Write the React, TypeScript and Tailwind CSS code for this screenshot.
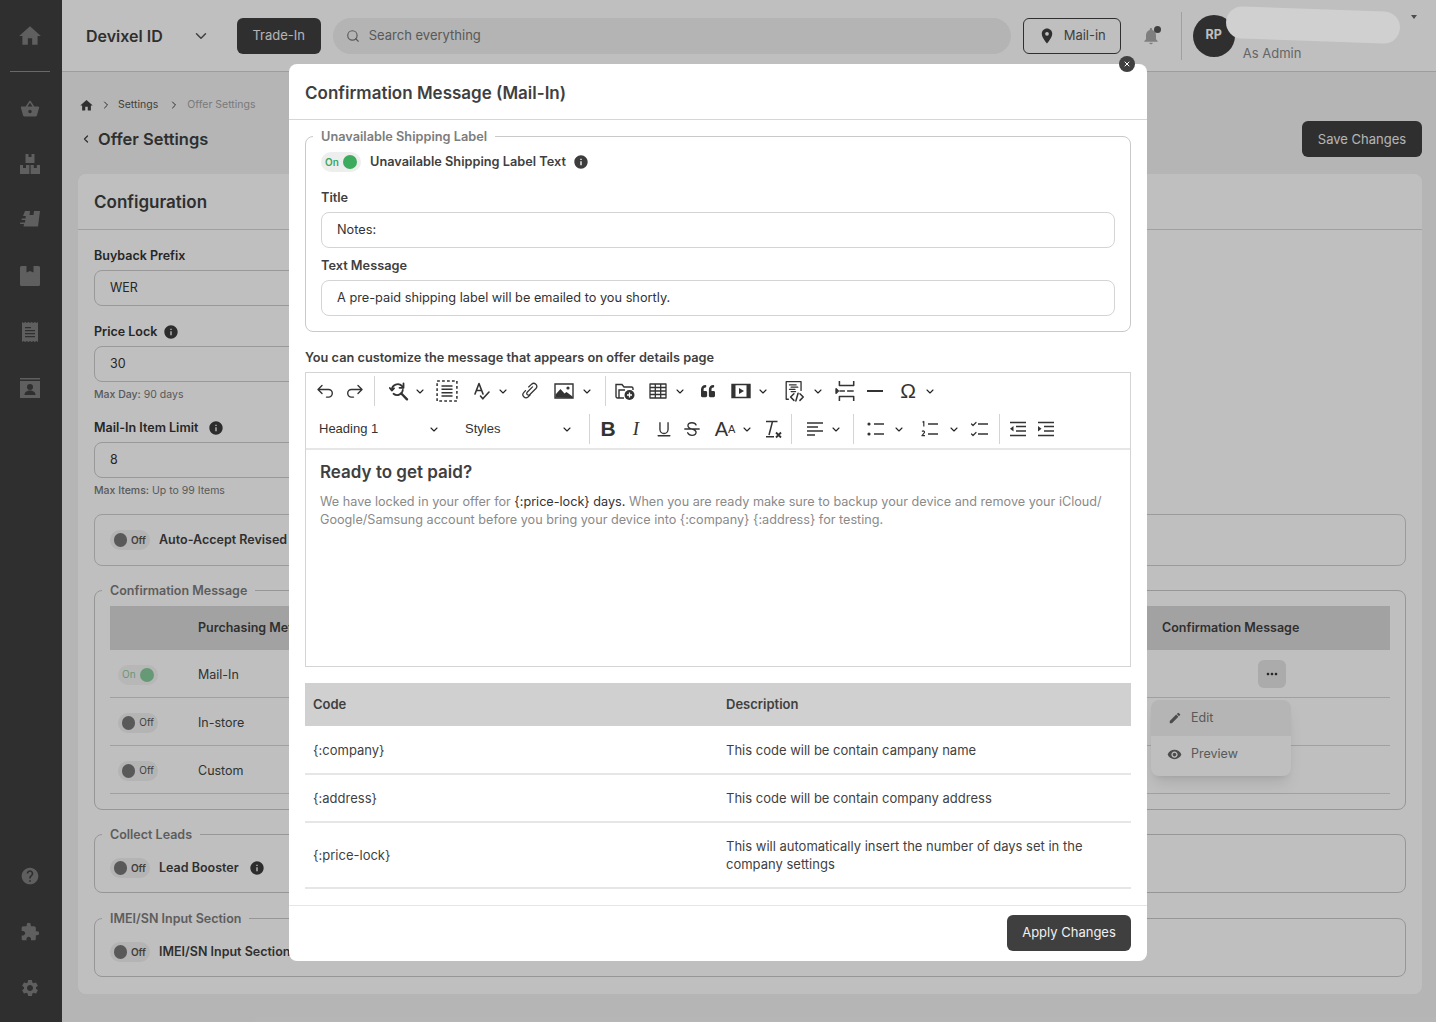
import { ReactNode } from "react";
import { ChevronDown, ChevronLeft, ChevronRight, Search, X } from "lucide-react";
import {
  MdHome,
  MdShoppingBasket,
  MdHelp,
  MdExtension,
  MdSettings,
  MdInfo,
  MdNotifications,
  MdLocationOn,
  MdVisibility,
  MdEdit,
  MdMoreHoriz,
} from "react-icons/md";
import { FaQuoteLeft } from "react-icons/fa";

// ---- small shared pieces ----

function Toggle({ on, dim, className = "" }: { on?: boolean; dim?: boolean; className?: string }) {
  return (
    <span
      className={`inline-flex h-5 w-10 shrink-0 items-center gap-1 rounded-full px-1 text-[10px] ${
        on ? "bg-[#eeeeee] text-[#3da55d]" : "bg-[#f0f0f0] text-[#555555]"
      } ${dim ? "opacity-60" : ""} ${className}`}
    >
      {on ? (
        <>
          <span>On</span>
          <span className="h-3.5 w-3.5 rounded-full bg-[#3cab5e]" />
        </>
      ) : (
        <>
          <span className="h-3.5 w-3.5 rounded-full bg-[#777777]" />
          <span>Off</span>
        </>
      )}
    </span>
  );
}

function Info({ className = "" }: { className?: string }) {
  return <MdInfo className={`h-4 w-4 shrink-0 text-[#3d3d3d] ${className}`} />;
}

function Field({ label, value, infoClass, hint }: { label: string; value: string; infoClass?: string; hint?: ReactNode }) {
  return (
    <div>
      <div className="flex h-[18px] items-center gap-2 text-[12.5px] font-semibold text-[#333333]">
        {label}
        {infoClass !== undefined && <Info className={infoClass} />}
      </div>
      <div className="mt-[5px] flex h-9 w-[640px] items-center rounded-lg border border-[#cccccc] px-[15px] pt-px text-[12.5px] text-[#333333]">
        {value}
      </div>
      {hint && <div className="mt-[6px] h-[13px] text-[10.5px] leading-[13px] text-[#777777]">{hint}</div>}
    </div>
  );
}

function Group({ title, className, legendSize, children }: { title: string; className?: string; legendSize?: string; children: ReactNode }) {
  return (
    <fieldset className={`rounded-lg border border-[#c9c9c9] px-[15px] ${className ?? ""}`}>
      <legend className={`-ml-2 px-2 font-semibold leading-[16px] text-[#7d7d7d] ${legendSize ?? "text-[12.5px]"}`}>
        <span className="block translate-y-px">{title}</span>
      </legend>
      {children}
    </fieldset>
  );
}

// ---- sidebar icons that the packs do not carry ----

const BoxesIcon = () => (
  <svg viewBox="0 0 20 20" className="h-5 w-5" fill="currentColor">
    <path d="M5.500 0h9v9h-9zM0 11h9.400v9H0zM10.600 11H20v9h-9.400z" />
    <path d="M8.500 0h3v3h-3zM3 11h3v3H3zM13.800 11h3v3h-3z" fill="#3f3f3f" />
  </svg>
);

const ShipIcon = () => (
  <svg viewBox="0 0 20 20" className="h-5 w-5" fill="currentColor">
    <path d="M5 1h15l-2 15.500H3.500L4 14H0l.3-1.500H5l.3-2.500H1.500l.3-1.500h3.700l.3-2.500H3z" />
    <path d="M10 1h4l-.5 4h-4z" fill="#3f3f3f" />
  </svg>
);

const BookmarkBoxIcon = () => (
  <svg viewBox="0 0 20 20" className="h-5 w-5" fill="currentColor">
    <path d="M1.500 0H6.500v6.500L10 5l3.500 1.500V0h5A1.500 1.500 0 0 1 20 1.500v17a1.500 1.500 0 0 1-1.500 1.500h-17A1.500 1.500 0 0 1 0 18.500v-17A1.500 1.500 0 0 1 1.500 0z" />
  </svg>
);

const ReceiptIcon = () => (
  <svg viewBox="0 0 20 20" className="h-5 w-5" fill="currentColor">
    <path d="M2 0l1.600 1L5.200 0l1.600 1 1.600-1L10 1l1.600-1 1.600 1 1.600-1 1.600 1L18 0v20l-1.600-1-1.600 1-1.600-1-1.600 1L10 19l-1.600 1-1.600-1-1.600 1-1.600-1L2 20z" />
    <path d="M5 5h6v1.200H5zM5 8h10v1.200H5zM5 11h10v1.200H5zM5 14h10v1.200H5z" fill="#3f3f3f" />
  </svg>
);

const ContactIcon = () => (
  <svg viewBox="0 0 20 20" className="h-5 w-5" fill="currentColor">
    <path d="M0 0h20v1.500H0zM0 3h20v17H0z" />
    <circle cx="10" cy="9" r="3" fill="#3f3f3f" />
    <path d="M4.500 17c0-3 2.500-4.500 5.500-4.500s5.500 1.500 5.500 4.500z" fill="#3f3f3f" />
  </svg>
);

const SideIcon = ({ children }: { children: ReactNode }) => (
  <div className="flex h-5 w-5 items-center justify-center text-[#7f7f7f]">{children}</div>
);

// ---- editor toolbar ----

const Tool = ({ className = "", children }: { className?: string; children: ReactNode }) => (
  <span className={`flex h-7 w-7 shrink-0 items-center justify-center text-[#333333] ${className}`}>{children}</span>
);

const Chev = ({ className = "" }: { className?: string }) => (
  <ChevronDown className={`h-[13px] w-3 shrink-0 text-[#222222] ${className}`} strokeWidth={2.2} />
);

const Sep = ({ className = "" }: { className?: string }) => (
  <span className={`h-[30px] w-px shrink-0 bg-[#d4d4d4] ${className}`} />
);

const svgProps = {
  viewBox: "0 0 20 20",
  fill: "none",
  stroke: "currentColor",
  strokeWidth: 1.4,
  strokeLinecap: "round" as const,
  strokeLinejoin: "round" as const,
};

const UndoIcon = () => (
  <svg {...svgProps} className="h-5 w-5">
    <path d="M6 4.500 2 8.500l4 4M2.500 8.500h10a3.800 3.800 0 0 1 0 7.600h-2" />
  </svg>
);
const RedoIcon = () => (
  <svg {...svgProps} className="h-5 w-5">
    <path d="M14 4.500l4 4-4 4M17.500 8.500h-10a3.800 3.800 0 0 0 0 7.600h2" />
  </svg>
);
const FindIcon = () => (
  <svg {...svgProps} strokeWidth={1.800} className="h-5 w-5">
    <path d="M2.800 9a6 6 0 0 1 10.200-4l1 1.500" />
    <path d="M14.500 2.500v4.300h-4M0.800 7l2 2.500L5 7.300" />
    <path d="M13.800 9a5.700 5.700 0 0 1-9.300 3.800" />
    <path d="M12.300 12.500l5.700 5.800" strokeWidth={2.400} />
  </svg>
);
const SelectAllIcon = () => (
  <svg {...svgProps} strokeLinecap="butt" className="h-[22px] w-[22px]">
    <rect x="1" y="1" width="18" height="18" strokeDasharray="2.500 2" />
    <path d="M5 5.500h10M5 8.500h10M5 11.500h10M5 14.500h10" />
  </svg>
);
const SpellIcon = () => (
  <svg {...svgProps} strokeWidth={1.600} className="h-5 w-5">
    <path d="M3 13 7 2.500 11 13M4.500 9.500h5" />
    <path d="M8.500 15l2.300 2.800L17 11" />
  </svg>
);
const LinkIcon = () => (
  <svg {...svgProps} className="h-[18px] w-[18px]">
    <path d="M8.500 5.500 11.800 2.400a3.400 3.400 0 0 1 4.800 4.800l-7 7a2 2 0 0 1-2.800-2.800l6-6" />
    <path d="M5 9.500 3 11.800a3.400 3.400 0 0 0 4.800 4.800L10 14.500" />
  </svg>
);
const ImageIcon = () => (
  <svg viewBox="0 0 20 20" className="h-5 w-5">
    <path d="M1 3h18v14H1z" fill="none" stroke="currentColor" strokeWidth="1.400" />
    <path d="M1.500 16.500v-3L6.500 8l4 4.500 2-1.500 6 4.500v1.500z" fill="currentColor" />
    <circle cx="14" cy="7" r="1.600" fill="currentColor" />
  </svg>
);
const FolderAddIcon = () => (
  <svg viewBox="0 0 20 20" className="h-5 w-5">
    <path d="M9 17H2.500A1.500 1.500 0 0 1 1 15.500V3.500h6l2 2.500h7.500A1.500 1.500 0 0 1 18 7.500V9M4 17V9h6" fill="none" stroke="currentColor" strokeWidth="1.400" />
    <circle cx="14.500" cy="14" r="5" fill="currentColor" />
    <path d="M14.500 11.500v5M12 14h5" stroke="#fff" strokeWidth="1.300" />
  </svg>
);
const TableIcon = () => (
  <svg {...svgProps} strokeLinecap="butt" strokeWidth={1.300} className="h-5 w-5">
    <path d="M2 3h16v14H2z" />
    <path d="M2 6.500h16M2 10h16M2 13.500h16M7.300 3v14M12.700 3v14" />
  </svg>
);
const MediaIcon = () => (
  <svg viewBox="0 0 20 20" className="h-5 w-5">
    <path d="M1 3.500h18v13H1z" fill="none" stroke="currentColor" strokeWidth="1.400" />
    <path d="M1 3.500h3.500v13H1zM15.500 3.500H19v13h-3.500z" fill="currentColor" />
    <path d="M8 7l5 3-5 3z" fill="currentColor" />
  </svg>
);
const CodeIcon = () => (
  <svg {...svgProps} strokeWidth={1.200} className="h-[22px] w-[22px]">
    <path d="M4 17.500H2V1.500h13.500v8" />
    <path d="M5 4.500h6M6.500 6.500h6M5 8.500h5M6.500 10.500h4" />
    <path d="M9 12.500l-3 3 3 3M14.500 12.500l3 3-3 3M12.800 12l-2 7" strokeWidth={1.400} />
  </svg>
);
const PageBreakIcon = () => (
  <svg {...svgProps} strokeLinecap="butt" className="h-[22px] w-[22px]">
    <path d="M4 1v4h13V1M4 19v-4h13v4" />
    <path d="M4 10h5M11 10h6" />
    <path d="M1 8l2 2-2 2z" fill="currentColor" />
  </svg>
);
const UnderlineIcon = () => (
  <svg {...svgProps} strokeWidth={1.500} className="h-[18px] w-[18px]">
    <path d="M5.500 3v7.500a4.500 4.500 0 0 0 9 0V3M3.500 17.500h13" />
  </svg>
);
const StrikeIcon = () => (
  <svg {...svgProps} strokeWidth={1.500} className="h-[18px] w-[18px]">
    <path d="M14.500 5.500C14 4 12.500 3 10 3 7.500 3 5.500 4.300 5.500 6.300c0 2 2 3 4.500 3.700 2.700.8 4.500 1.700 4.500 3.700S12.500 17 10 17c-2.500 0-4-1-4.800-2.800M2 10h16" />
  </svg>
);
const ClearIcon = () => (
  <svg {...svgProps} strokeLinecap="butt" className="h-5 w-5">
    <path d="M3 2.500h11.500M9.500 2.500 6 16M3 17.800h8" strokeWidth={1.500} />
    <path d="M13 13.500l5 5M18 13.500l-5 5" strokeWidth={1.800} />
  </svg>
);
const AlignIcon = () => (
  <svg {...svgProps} strokeWidth={1.600} strokeLinecap="butt" className="h-5 w-5">
    <path d="M2 4h16M2 8h11M2 12h16M2 16h8" />
  </svg>
);
const BulletIcon = () => (
  <svg {...svgProps} strokeLinecap="butt" strokeWidth={1.600} className="h-5 w-5">
    <path d="M8 5h10M8 15h10" />
    <circle cx="3" cy="5" r="1.600" fill="currentColor" stroke="none" />
    <circle cx="3" cy="15" r="1.600" fill="currentColor" stroke="none" />
  </svg>
);
const OrderedIcon = () => (
  <svg {...svgProps} strokeLinecap="butt" className="h-5 w-5">
    <path d="M8 5h10M8 15h10" strokeWidth={1.600} />
    <path d="M2.500 3.200 3.800 2.500v5M2 12.500c1-1 2.800-.5 2.500 1l-2.500 3.200h3" strokeWidth={1.200} />
  </svg>
);
const TodoIcon = () => (
  <svg {...svgProps} className="h-5 w-5">
    <path d="M8 5h10M8 15h10" strokeWidth={1.600} strokeLinecap="butt" />
    <path d="M1.500 5l1.500 1.500L6 3.500M1.500 15l1.500 1.500L6 13.500" strokeWidth={1.200} />
  </svg>
);
const OutdentIcon = () => (
  <svg {...svgProps} strokeLinecap="butt" strokeWidth={1.500} className="h-5 w-5">
    <path d="M2 3.500h16M8 7.500h10M8 12h10M2 16.500h16" />
    <path d="M5.500 7 2 9.800l3.500 2.700z" fill="currentColor" stroke="none" />
  </svg>
);
const IndentIcon = () => (
  <svg {...svgProps} strokeLinecap="butt" strokeWidth={1.500} className="h-5 w-5">
    <path d="M2 3.500h16M8 7.500h10M8 12h10M2 16.500h16" />
    <path d="M2 7l3.500 2.800L2 12.500z" fill="currentColor" stroke="none" />
  </svg>
);

function EditorToolbar() {
  return (
    <div className="border-b-2 border-[#e6e6e6]">
      <div className="flex h-[37px] items-center pb-px pl-[6px]">
        <Tool><UndoIcon /></Tool>
        <Tool><RedoIcon /></Tool>
        <Sep className="ml-[6px]" />
        <Tool className="ml-[10px]"><FindIcon /></Tool>
        <Chev className="ml-px" />
        <Tool className="ml-[7px]"><SelectAllIcon /></Tool>
        <Tool className="ml-[7px]"><SpellIcon /></Tool>
        <Chev className="ml-px" />
        <Tool className="ml-[7px]"><LinkIcon /></Tool>
        <Tool className="ml-[6px]"><ImageIcon /></Tool>
        <Chev className="ml-[3px]" />
        <Sep className="ml-3" />
        <Tool className="ml-[5px]"><FolderAddIcon /></Tool>
        <Tool className="ml-[5px]"><TableIcon /></Tool>
        <Chev className="ml-[2px]" />
        <Tool className="ml-2"><FaQuoteLeft className="h-[14px] w-[14px]" /></Tool>
        <Tool className="ml-[5px]"><MediaIcon /></Tool>
        <Chev className="ml-[2px]" />
        <Tool className="ml-3"><CodeIcon /></Tool>
        <Chev className="ml-[3px]" />
        <Tool className="ml-2"><PageBreakIcon /></Tool>
        <Tool className="ml-px"><span className="h-[2px] w-4 bg-[#333333]" /></Tool>
        <Tool className="ml-[5px] text-[21px] [font-family:'Liberation_Sans',sans-serif]">Ω</Tool>
        <Chev className="ml-[2px]" />
      </div>
      <div className="flex h-[38px] items-center pl-[13px] text-[13px] text-[#333333] [font-family:'Liberation_Sans',sans-serif]">
        <span className="flex w-[121px] items-center justify-between">Heading 1<Chev /></span>
        <span className="ml-[25px] flex w-[108px] items-center justify-between">Styles<Chev /></span>
        <Sep className="ml-4" />
        <Tool className="ml-1 text-[21px] font-bold">B</Tool>
        <Tool className="text-[19px] italic [font-family:'Liberation_Serif',serif]">I</Tool>
        <Tool><UnderlineIcon /></Tool>
        <Tool><StrikeIcon /></Tool>
        <Tool className="ml-[5px] text-[20px]">A<span className="text-[11px]">A</span></Tool>
        <Chev className="ml-[2px]" />
        <Tool className="ml-[6px]"><ClearIcon /></Tool>
        <Sep className="ml-1" />
        <Tool className="ml-[9px]"><AlignIcon /></Tool>
        <Chev className="ml-px" />
        <Sep className="ml-[11px]" />
        <Tool className="ml-2"><BulletIcon /></Tool>
        <Chev className="ml-[3px]" />
        <Tool className="ml-[11px]"><OrderedIcon /></Tool>
        <Chev className="ml-1" />
        <Tool className="ml-[6px]"><TodoIcon /></Tool>
        <Sep className="ml-[5px]" />
        <Tool className="ml-1"><OutdentIcon /></Tool>
        <Tool><IndentIcon /></Tool>
      </div>
    </div>
  );
}

// ---- page behind the dialog ----

const RULE_ROWS = [
  { label: "Mail-In", on: true },
  { label: "In-store", on: false },
  { label: "Custom", on: false },
];

function Page() {
  return (
    <div className="flex h-[1022px] overflow-hidden bg-[#f2f2f2]">
      <aside className="flex w-[62px] shrink-0 flex-col items-center bg-[#3f3f3f] pb-6 pr-[2px]">
        <div className="flex h-[72px] w-10 shrink-0 items-center justify-center border-b border-[#8c8c8c] pt-px text-[#7f7f7f]">
          <MdHome className="h-[26px] w-[26px]" />
        </div>
        <div className="flex flex-col gap-9 pt-[26px]">
          <SideIcon><MdShoppingBasket className="h-6 w-6 translate-y-px" /></SideIcon>
          <SideIcon><BoxesIcon /></SideIcon>
          <SideIcon><ShipIcon /></SideIcon>
          <SideIcon><BookmarkBoxIcon /></SideIcon>
          <SideIcon><ReceiptIcon /></SideIcon>
          <SideIcon><ContactIcon /></SideIcon>
        </div>
        <div className="mt-auto flex flex-col gap-9">
          <SideIcon><MdHelp className="h-6 w-6" /></SideIcon>
          <SideIcon><MdExtension className="h-6 w-6" /></SideIcon>
          <SideIcon><MdSettings className="h-6 w-6" /></SideIcon>
        </div>
      </aside>

      <div className="flex min-w-0 flex-1 flex-col">
        <header className="flex h-[72px] shrink-0 items-center border-b border-[#d2d2d2] bg-white pl-6 pr-[14px]">
          <span className="text-[16px] font-semibold text-[#3f3f3f]">Devixel ID</span>
          <ChevronDown className="ml-[29px] h-[18px] w-[18px] text-[#555555]" />
          <button className="ml-[27px] h-9 w-[84px] rounded-md bg-[#3f3f3f] text-[13px] text-[#f0f0f0]">Trade-In</button>
          <div className="ml-3 flex h-9 w-[678px] items-center rounded-full bg-[#f0f0f0] pl-[13px] text-[13px] text-[#777777]">
            <Search className="h-[14px] w-[14px]" />
            <span className="ml-[9px]">Search everything</span>
          </div>
          <button className="ml-3 flex h-9 w-[98px] items-center justify-center gap-2 rounded-md border border-[#3f3f3f] text-[13px] text-[#555555]">
            <MdLocationOn className="h-[18px] w-[18px] text-[#3f3f3f]" />
            Mail-in
          </button>
          <div className="relative ml-5 h-5 w-5 text-[#aaaaaa]">
            <MdNotifications className="h-5 w-5" />
            <span className="absolute right-0 top-0 h-[7px] w-[7px] rounded-full bg-[#555555]" />
          </div>
          <span className="ml-5 h-12 w-px bg-[#d6d6d6]" />
          <div className="relative ml-[11px] flex flex-1 items-center">
            <span className="flex h-[42px] w-[42px] items-center justify-center rounded-full bg-[#3f3f3f] text-[12.5px] font-bold text-white">RP</span>
            <span className="ml-2 mt-[36px] text-[13px] text-[#888888]">As Admin</span>
            <span className="absolute right-[5px] top-[7px] h-0 w-0 border-x-[3px] border-t-[4px] border-x-transparent border-t-[#666666]" />
          </div>
        </header>

        <main className="flex min-h-0 flex-1 flex-col pl-4 pr-[14px]">
          <div className="flex h-[32px] items-center pl-[1px] pt-[33px] text-[10.5px] text-[#555555]">
            <MdHome className="h-[15px] w-[15px] text-[#3f3f3f]" />
            <ChevronRight className="ml-[6px] h-3 w-3 text-[#3f3f3f]" />
            <span className="ml-[6px]">Settings</span>
            <ChevronRight className="ml-[10px] h-3 w-3 text-[#3f3f3f]" />
            <span className="ml-[7px] text-[#a3a3a3]">Offer Settings</span>
          </div>
          <div className="flex h-[69px] items-start justify-between">
            <div className="mt-[22px] flex items-center pl-[2px] text-[#3f3f3f]">
              <ChevronLeft className="h-3 w-3" strokeWidth={2.500} />
              <span className="ml-[6px] text-[16.500px] font-semibold">Offer Settings</span>
            </div>
            <button className="mt-4 h-9 w-[120px] rounded-md bg-[#3f3f3f] pt-px text-[13px] text-[#f0f0f0]">Save Changes</button>
          </div>

          <section className="h-[820px] rounded-lg bg-white">
            <div className="flex h-14 items-center border-b border-[#d6d6d6] px-4 pt-[3px] text-[17px] font-semibold text-[#3f3f3f]">Configuration</div>
            <div className="flex flex-col px-4 pt-[17px]">
              <Field label="Buyback Prefix" value="WER" />
              <div className="mt-[17px]">
                <Field label="Price Lock" value="30" infoClass="-ml-[2px]" hint={<><span className="font-medium">Max Day:</span> 90 days</>} />
              </div>
              <div className="mt-[18px]">
                <Field label="Mail-In Item Limit" value="8" infoClass="ml-[2px]" hint={<><span className="font-medium">Max Items:</span> Up to 99 Items</>} />
              </div>
              <div className="mt-[17px] flex h-[52px] items-center gap-[9px] rounded-lg border border-[#cfcfcf] px-[15px] text-[12.5px] font-semibold text-[#3f3f3f]">
                <Toggle />
                Auto-Accept Revised Offers
              </div>
              <Group title="Confirmation Message" className="mt-4 h-[228px] pb-4">
                <div className="grid grid-cols-[88px_1fr_228px] pt-2 text-[12.5px] text-[#444444]">
                  <div className="col-span-3 grid h-11 grid-cols-subgrid items-center bg-[#d9d9d9] font-semibold text-[#3f3f3f]">
                    <span />
                    <span>Purchasing Method</span>
                    <span>Confirmation Message</span>
                  </div>
                  {RULE_ROWS.map((row, i) => (
                    <div key={row.label} className="col-span-3 grid h-12 grid-cols-subgrid items-center border-b border-[#d6d6d6]">
                      <span className="flex pl-2 pt-[2px]"><Toggle on={row.on} dim={row.on} /></span>
                      <span className="pt-[3px]">{row.label}</span>
                      <span className="pl-[96px]">
                        {i === 0 && (
                          <span className="flex h-7 w-7 items-center justify-center rounded-md bg-[#e4e4e4]">
                            <MdMoreHoriz className="h-4 w-4 text-[#333333]" />
                          </span>
                        )}
                      </span>
                    </div>
                  ))}
                </div>
              </Group>
              <Group title="Collect Leads" className="mt-4 h-[67px]">
                <div className="flex items-center gap-[9px] pt-4 text-[12.5px] font-semibold text-[#3f3f3f]">
                  <Toggle />
                  Lead Booster
                  <Info className="ml-[1px]" />
                </div>
              </Group>
              <Group title="IMEI/SN Input Section" className="mt-[17px] h-[67px]">
                <div className="flex items-center gap-[9px] pt-4 text-[12.5px] font-semibold text-[#3f3f3f]">
                  <Toggle />
                  IMEI/SN Input Section
                </div>
              </Group>
            </div>
          </section>
        </main>
      </div>

      {/* row action menu */}
      <div className="absolute left-[1151px] top-[700px] w-[140px] overflow-hidden rounded-lg bg-white text-[12.5px] text-[#777777] shadow-lg">
        <div className="flex h-9 items-center gap-[9px] bg-[#f2f2f2] pl-[17px]">
          <MdEdit className="h-[14px] w-[14px] text-[#666666]" />
          Edit
        </div>
        <div className="flex h-10 items-center gap-[9px] pb-1 pl-4">
          <MdVisibility className="h-[15px] w-[15px] text-[#666666]" />
          Preview
        </div>
      </div>
    </div>
  );
}

// ---- dialog ----

const CODES = [
  { code: "{:company}", desc: "This code will be contain campany name", h: "h-12" },
  { code: "{:address}", desc: "This code will be contain company address", h: "h-12" },
  { code: "{:price-lock}", desc: "This will automatically insert the number of days set in the company settings", h: "h-[66px]" },
];

function Dialog() {
  return (
    <div className="absolute inset-0 bg-black/25">
      {/* name blanked out in the screenshot, painted over the dimmed header */}
      <span className="absolute left-[1226px] top-[9px] h-[32px] w-[174px] rotate-[2deg] rounded-full bg-[#d0d0d0]" />

      <div className="absolute left-[289px] top-16 h-[897px] w-[858px] rounded-lg bg-white">
        <button className="absolute -top-2 right-3 flex h-4 w-4 items-center justify-center rounded-full bg-[#3f3f3f] text-white">
          <X className="h-2 w-2" strokeWidth={3} />
        </button>
        <div className="flex h-14 items-center border-b border-[#d6d6d6] px-4 pt-[5px] text-[17px] font-semibold text-[#3f3f3f]">
          Confirmation Message (Mail-In)
        </div>

        <div className="px-4">
          <Group title="Unavailable Shipping Label" legendSize="text-[12.75px]" className="mt-2 h-[204px]">
            <div className="flex items-center gap-[9px] pt-2 text-[12.75px] font-semibold text-[#3f3f3f]">
              <Toggle on />
              Unavailable Shipping Label Text
              <Info className="-ml-[2px]" />
            </div>
            <label className="mt-[17px] block h-[18px] text-[12.75px] font-semibold leading-[18px] text-[#3f3f3f]">Title</label>
            <div className="mt-[5px] flex h-9 items-center rounded-lg border border-[#d4d4d4] px-[15px] text-[12.75px] text-[#333333]">Notes:</div>
            <label className="mt-[9px] block h-[18px] text-[12.75px] font-semibold leading-[18px] text-[#3f3f3f]">Text Message</label>
            <div className="mt-[5px] flex h-9 items-center rounded-lg border border-[#d4d4d4] px-[15px] text-[12.75px] text-[#333333]">A pre-paid shipping label will be emailed to you shortly.</div>
          </Group>

          <p className="mt-[17px] h-[18px] text-[12.75px] font-semibold leading-[18px] text-[#3f3f3f]">
            You can customize the message that appears on offer details page
          </p>

          <div className="mt-[5px] h-[295px] border border-[#d4d4d4]">
            <EditorToolbar />
            <div className="px-[14px] pt-[10px]">
              <h2 className="h-6 text-[17px] font-semibold leading-6 text-[#3f3f3f]">Ready to get paid?</h2>
              <p className="mt-[9px] text-[12.65px] leading-[18px] text-[#8a8a8a]">
                We have locked in your offer for <span className="text-[#333333]">{"{:price-lock} days."}</span> When you are ready make sure to backup your device and remove your iCloud/
                <br />
                Google/Samsung account before you bring your device into {"{:company} {:address}"} for testing.
              </p>
            </div>
          </div>

          <table className="mt-4 w-full table-fixed border-collapse text-[13px] text-[#3f3f3f]">
            <thead>
              <tr className="h-[43px] bg-[#d0d0d0] text-left">
                <th className="w-[421px] pl-2 font-semibold">Code</th>
                <th className="font-semibold">Description</th>
              </tr>
            </thead>
            <tbody>
              {CODES.map(row => (
                <tr key={row.code} className={`${row.h} border-b-2 border-[#e6e6e6]`}>
                  <td className="pl-2 pt-[2px]">{row.code}</td>
                  <td className="pr-10 leading-[18px]">{row.desc}</td>
                </tr>
              ))}
            </tbody>
          </table>
        </div>

        <div className="absolute inset-x-0 bottom-0 flex h-14 items-center justify-end border-t border-[#e6e6e6] px-4 pb-[2px]">
          <button className="h-9 w-[124px] rounded-md bg-[#3f3f3f] text-[13px] text-[#f0f0f0]">Apply Changes</button>
        </div>
      </div>
    </div>
  );
}

export default function App() {
  return (
    <div className="relative h-[1022px] overflow-hidden [font-family:Inter,sans-serif]">
      <Page />
      <Dialog />
    </div>
  );
}
